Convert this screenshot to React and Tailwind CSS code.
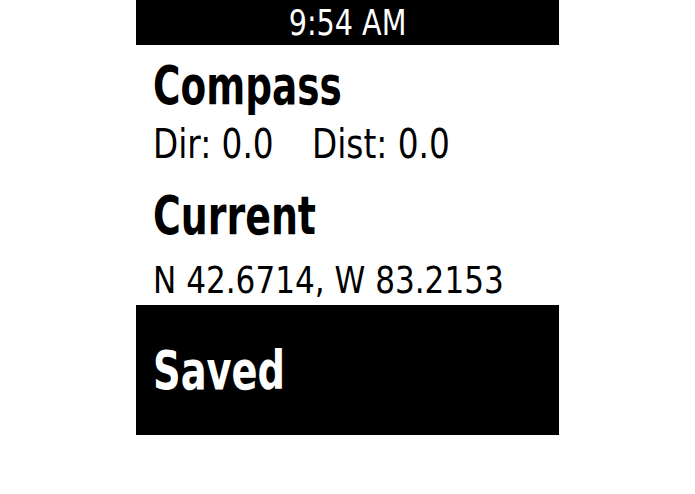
export default function App() {
  const font = { fontFamily: '"DejaVu Sans Condensed", "Liberation Sans", sans-serif' };

  return (
    <div className="w-[695px] h-[494px] bg-white flex justify-center" style={font}>
      <div className="w-[423px] flex flex-col">
        {/* status bar */}
        <div className="h-[45px] bg-black flex items-center justify-center">
          <span className="inline-block scale-x-[0.885] text-white text-[36px] leading-[36px]">9:54 AM</span>
        </div>

        {/* compass / current */}
        <div className="h-[260px] bg-white pl-[17px] pt-[14px] flex flex-col items-start">
          <div className="origin-left scale-x-[0.77] text-black font-bold text-[54px] leading-[54px]">Compass</div>
          <div className="mt-[11px] flex gap-[40px] text-black text-[40px] leading-[40px]">
            <span className="inline-block origin-left scale-x-[0.91] w-[119px] whitespace-nowrap">Dir: 0.0</span>
            <span className="inline-block origin-left scale-x-[0.91] whitespace-nowrap">Dist: 0.0</span>
          </div>
          <div className="mt-[25px] origin-left scale-x-[0.78] text-black font-bold text-[54px] leading-[54px]">Current</div>
          <div className="mt-[18px] origin-left scale-x-[0.91] whitespace-nowrap text-black text-[38px] leading-[38px]">N 42.6714, W 83.2153</div>
        </div>

        {/* selected menu row */}
        <div className="h-[130px] bg-black pl-[17px] pt-[39px] flex items-start">
          <div className="origin-left scale-x-[0.79] text-white font-bold text-[54px] leading-[54px]">Saved</div>
        </div>
      </div>
    </div>
  );
}
